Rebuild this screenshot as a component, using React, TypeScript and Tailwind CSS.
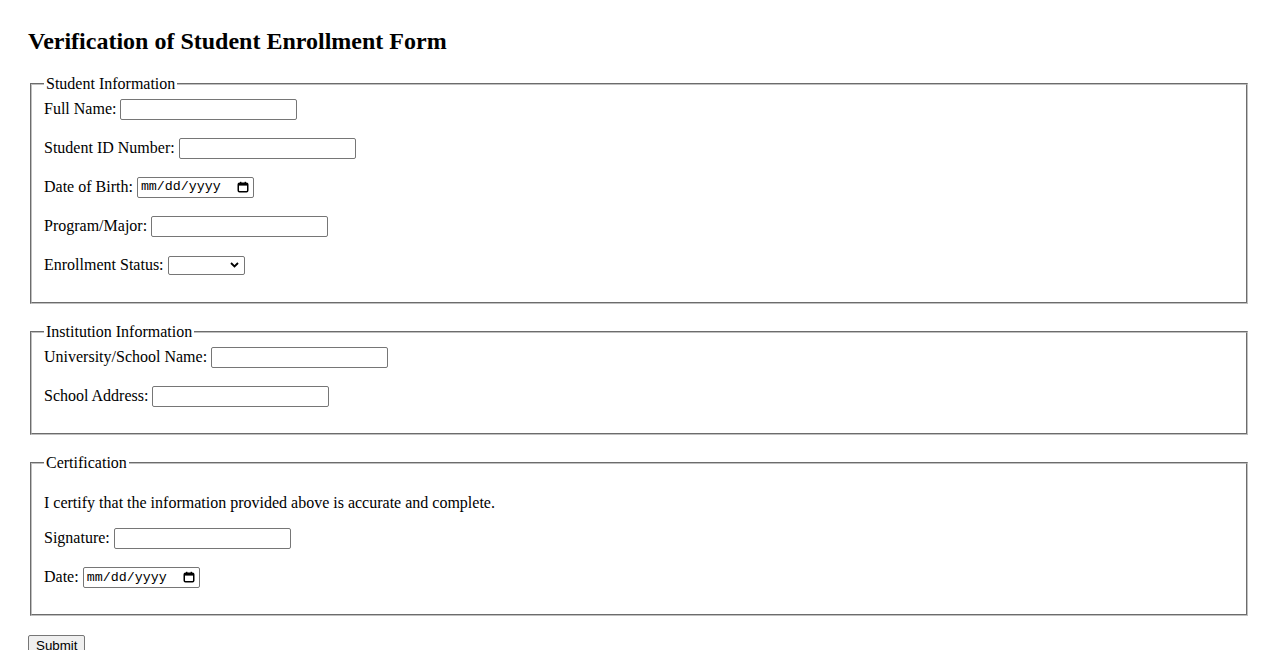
import React from "react";

const inputCls =
  "w-[177px] h-[21px] border border-[#767676] rounded-[2px] bg-white px-[2px] font-['Liberation_Sans',Arial,sans-serif] text-[13.33px] outline-none";

const fieldsetCls =
  "mx-[2px] mb-[19px] border-2 border-[#c0c0c0] [--tw-border-style:groove] [border-style:groove] px-[12px] pt-[5.6px] pb-[10px]";

function Row({ children }: { children: React.ReactNode }) {
  return <div className="flex items-center gap-[4px] h-[21px] mb-[18px] last:mb-[16.5px]">{children}</div>;
}

function CalendarIcon() {
  return (
    <svg width="12" height="12" viewBox="0 0 12 12" fill="none">
      <rect x="1.25" y="2.25" width="9.5" height="8.5" rx="1.2" stroke="#000" strokeWidth="1.5" />
      <rect x="1" y="2" width="10" height="2.6" fill="#000" />
      <rect x="3" y="0.8" width="1.4" height="2" fill="#000" />
      <rect x="7.6" y="0.8" width="1.4" height="2" fill="#000" />
    </svg>
  );
}

function DateField({ id }: { id: string }) {
  return (
    <div
      id={id}
      role="textbox"
      className="inline-flex items-center justify-between w-[117px] h-[21px] border border-[#767676] rounded-[2px] bg-white pl-[3px] pr-[4px]"
    >
      <span className="font-['Liberation_Mono','Courier_New',monospace] text-[13.33px] leading-none">mm/dd/yyyy</span>
      <CalendarIcon />
    </div>
  );
}

function SelectField() {
  return (
    <div className="inline-flex items-center justify-end w-[77px] h-[19px] border border-[#767676] rounded-[2px] bg-white pr-[5px]">
      <svg width="9" height="6" viewBox="0 0 9 6" fill="none">
        <path d="M1 1l3.5 3.5L8 1" stroke="#000" strokeWidth="1.8" />
      </svg>
    </div>
  );
}

export default function App() {
  return (
    <div className="h-screen overflow-hidden bg-white px-[28px] pt-[28px] font-['Liberation_Serif','Times_New_Roman',serif] text-[16px] leading-[normal] text-black">
      <h2 className="text-[24px] font-bold mb-[20px]">Verification of Student Enrollment Form</h2>
      <form onSubmit={(e) => e.preventDefault()}>
        <fieldset className={fieldsetCls}>
          <legend className="px-[2px]">Student Information</legend>
          <Row>
            <label htmlFor="fullName">Full Name:</label>
            <input id="fullName" type="text" className={inputCls} />
          </Row>
          <Row>
            <label htmlFor="studentId">Student ID Number:</label>
            <input id="studentId" type="text" className={inputCls} />
          </Row>
          <Row>
            <label htmlFor="dob">Date of Birth:</label>
            <DateField id="dob" />
          </Row>
          <Row>
            <label htmlFor="program">Program/Major:</label>
            <input id="program" type="text" className={inputCls} />
          </Row>
          <Row>
            <label>Enrollment Status:</label>
            <SelectField />
          </Row>
        </fieldset>

        <fieldset className={fieldsetCls}>
          <legend className="px-[2px]">Institution Information</legend>
          <Row>
            <label htmlFor="school">University/School Name:</label>
            <input id="school" type="text" className={inputCls} />
          </Row>
          <Row>
            <label htmlFor="address">School Address:</label>
            <input id="address" type="text" className={inputCls} />
          </Row>
        </fieldset>

        <fieldset className={fieldsetCls}>
          <legend className="px-[2px]">Certification</legend>
          <p className="my-[16px]">I certify that the information provided above is accurate and complete.</p>
          <Row>
            <label htmlFor="signature">Signature:</label>
            <input id="signature" type="text" className={inputCls} />
          </Row>
          <Row>
            <label htmlFor="date">Date:</label>
            <DateField id="date" />
          </Row>
        </fieldset>

        <div>
          <button
            type="submit"
            className="h-[21px] px-[7px] border border-[#767676] rounded-[2px] bg-[#efefef] font-['Liberation_Sans',Arial,sans-serif] text-[13.33px] leading-none"
          >
            Submit
          </button>
        </div>
      </form>
    </div>
  );
}
